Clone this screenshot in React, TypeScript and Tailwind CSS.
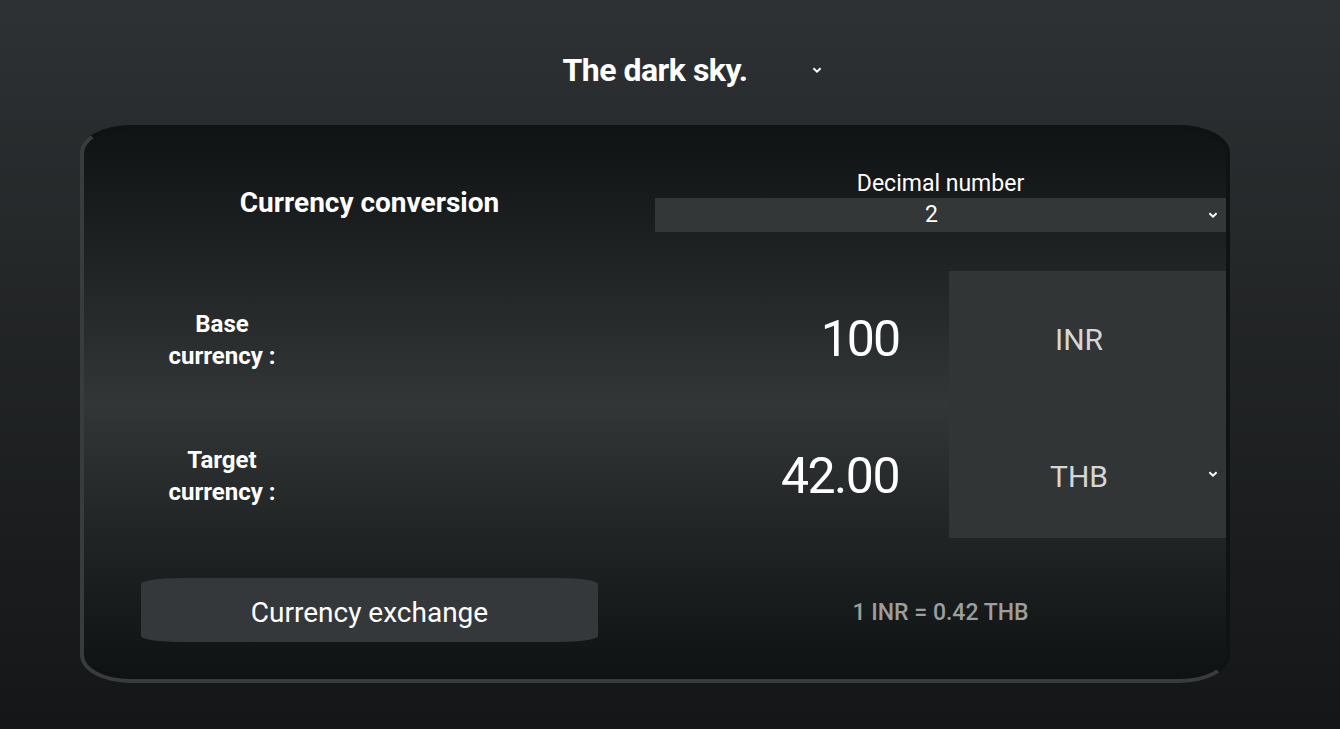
import { useState } from "react"

const Chevron = ({ className = "" }: { className?: string }) => (
  <svg width="10" height="6" viewBox="0 0 10 6" className={className}>
    <path d="M1.4 1.2 5 4.6 8.6 1.2" fill="none" stroke="currentColor" strokeWidth="1.9" />
  </svg>
)

export default function App() {
  const [amount, setAmount] = useState("100")
  const rate = 0.42
  const result = (Number(amount) * rate).toFixed(2)

  return (
    <div className="min-h-screen bg-gradient-to-b from-[#2e3133] to-[#141617] font-['Roboto',sans-serif] text-white">
      <div className="w-[1310px] pt-[46px] pb-[46px]">
        {/* theme picker */}
        <div className="mx-auto grid h-[41px] w-[342px] grid-cols-[1fr_auto_1fr] items-center">
          <span />
          <span className="text-[32px] font-bold tracking-[-0.5px]">The dark sky.</span>
          <Chevron className="justify-self-end mr-[4px] mb-[1px]" />
        </div>

        <div className="ml-[80px] mt-[38px] w-[1150px] overflow-hidden rounded-[50px_/_28px] border-4 border-t-[#101314] border-r-[#101314] border-b-[#393c3e] border-l-[#393c3e] bg-gradient-to-b from-[#101314] via-[#333637] to-[#0f1213]">
          {/* header */}
          <div className="grid h-[142px] grid-cols-2">
            <div className="flex items-center justify-center pt-[5px]">
              <h1 className="text-[28px] font-bold">Currency conversion</h1>
            </div>
            <div className="flex flex-col pt-[41px]">
              <p className="text-center text-[23px] leading-[27px]">Decimal number</p>
              <div className="mt-[1px] grid h-[34px] grid-cols-[1fr_auto_1fr] items-center bg-[#343738] px-[8px]">
                <span />
                <span className="mr-[18px] text-[23px]">2</span>
                <Chevron className="justify-self-end" />
              </div>
            </div>
          </div>

          {/* base row */}
          <div className="grid h-[137px] grid-cols-[276px_1fr_277px]">
            <div className="flex items-center justify-center">
              <p className="w-[130px] text-center text-[24px] font-bold leading-[32px]">Base currency :</p>
            </div>
            <div className="flex items-center pr-[50px]">
              <input
                value={amount}
                onChange={(e) => setAmount(e.target.value)}
                className="w-full bg-transparent text-right text-[50px] tracking-[-2px] outline-none"
              />
            </div>
            <div className="flex items-center justify-center bg-[#323536] pr-[17px] text-[30px] text-[#d6d6d6]">INR</div>
          </div>

          {/* target row */}
          <div className="grid h-[130px] grid-cols-[276px_1fr_277px]">
            <div className="flex items-center justify-center pt-[6px]">
              <p className="w-[130px] text-center text-[24px] font-bold leading-[32px]">Target currency :</p>
            </div>
            <div className="flex items-center justify-end pt-[6px] pr-[50px] text-[50px] tracking-[-1.5px]">
              {result}
            </div>
            <div className="grid grid-cols-[1fr_auto_1fr] items-center bg-[#323536] px-[8px] pt-[6px] text-[30px] text-[#d6d6d6]">
              <span />
              <span className="mr-[17px]">THB</span>
              <Chevron className="justify-self-end mb-[4px] text-white" />
            </div>
          </div>

          {/* footer */}
          <div className="grid h-[141px] grid-cols-2 items-center">
            <button className="mx-auto mt-[3px] h-[64px] w-[457px] rounded-[40px_/_6px] bg-[#35383a] pt-[5px] text-[28px]">
              Currency exchange
            </button>
            <p className="mt-[10px] text-center text-[23px] font-medium text-[#9c9e9f]">1 INR = 0.42 THB</p>
          </div>
        </div>
      </div>
    </div>
  )
}
